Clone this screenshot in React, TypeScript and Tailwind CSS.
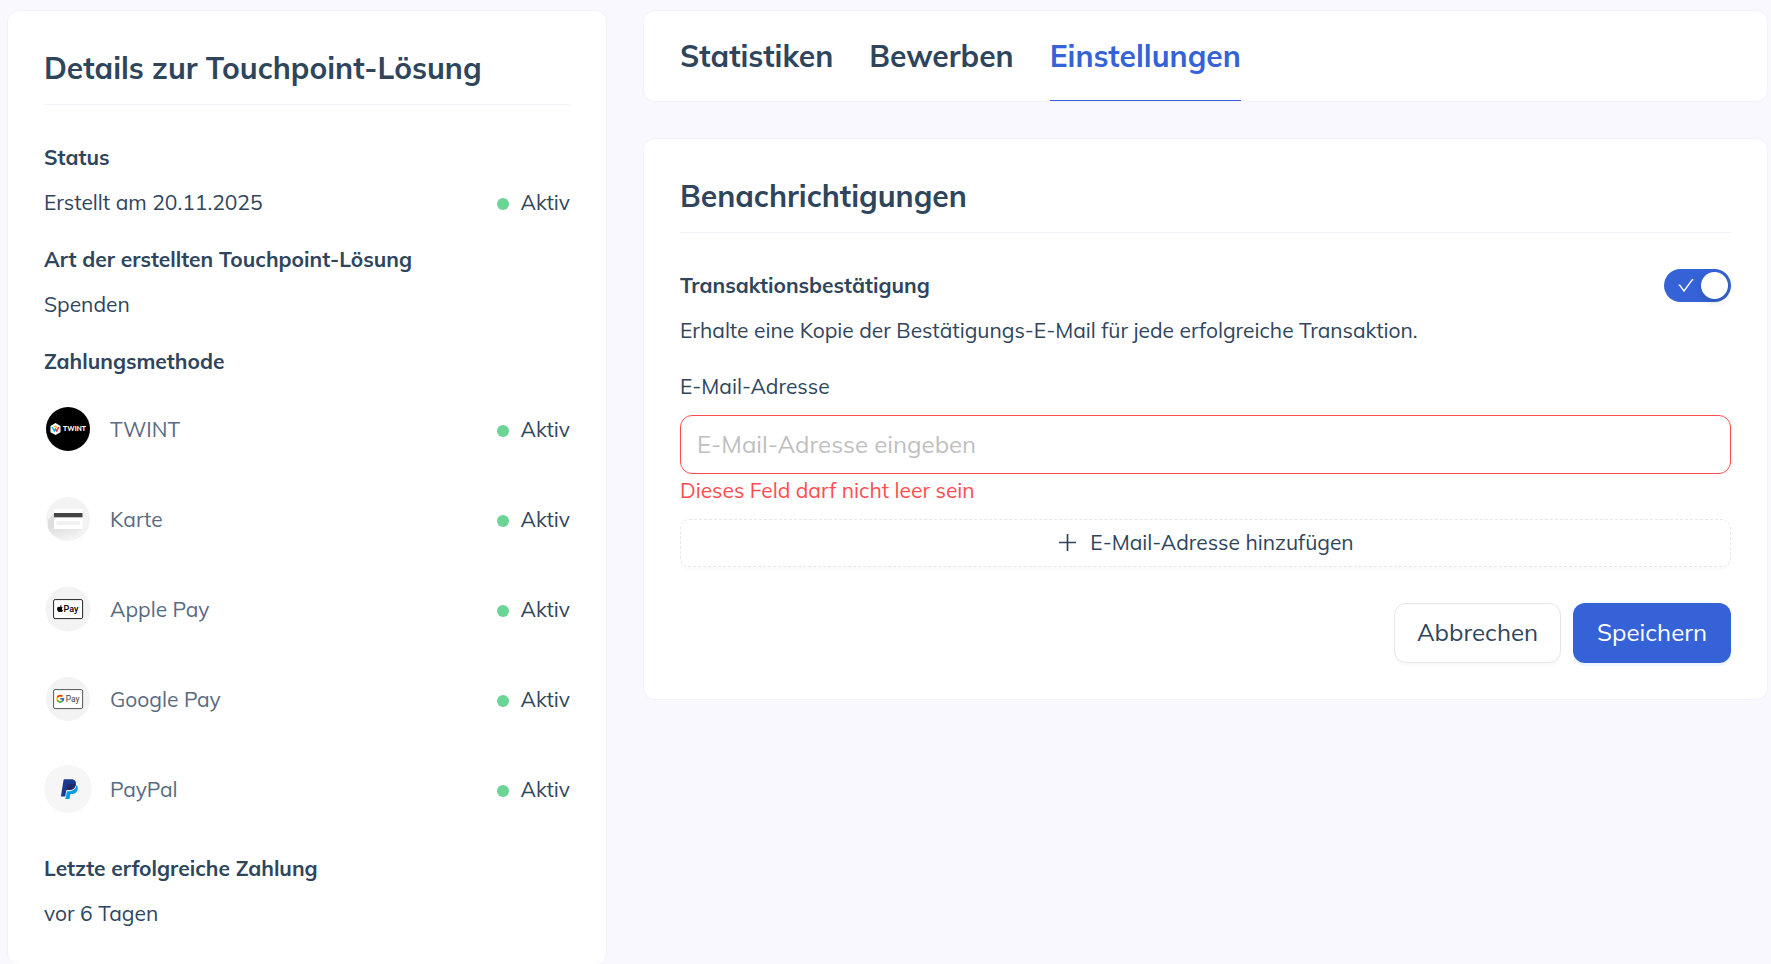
import React, { useState } from "react";
import { FaApple } from "react-icons/fa";
import { FcGoogle } from "react-icons/fc";

const TwintLogo: React.FC = () => (
  <svg viewBox="0 0 48 48" className="size-12" aria-hidden="true">
    <circle cx="24" cy="24" r="22" fill="#000" />
    <path d="M11.5 18l5 2.9v6.3l-5 2.9-5-2.9v-6.3z" fill="#fff" />
    <path d="M8.2 22l2.2 4 1.3-2.4" fill="none" stroke="#00b4e6" strokeWidth="1.5" />
    <path d="M10 21.8l1.5-.5 1.4 1.3" fill="none" stroke="#ffb31c" strokeWidth="1.5" />
    <path d="M11.2 23.6l1.5 2.4 2.1-4" fill="none" stroke="#f0343c" strokeWidth="1.5" />
    <text
      x="19"
      y="26.4"
      fill="#fff"
      fontSize="6.6"
      fontWeight="800"
      fontFamily="Mulish, 'Open Sans', sans-serif"
    >
      TWINT
    </text>
  </svg>
);

const CardLogo: React.FC = () => (
  <svg viewBox="0 0 48 48" className="size-12" aria-hidden="true">
    <defs>
      <linearGradient id="card-shadow" x1="0.3" y1="0" x2="0.6" y2="1">
        <stop offset="0.4" stopColor="#dedede" />
        <stop offset="1" stopColor="#f3f3f3" />
      </linearGradient>
      <clipPath id="card-circle">
        <circle cx="24" cy="24" r="22" />
      </clipPath>
    </defs>
    <circle cx="24" cy="24" r="22" fill="#f3f3f3" />
    <path
      d="M10 18l-6 7v20h22l12.5-11z"
      fill="url(#card-shadow)"
      clipPath="url(#card-circle)"
    />
    <rect x="10" y="14" width="28.5" height="20" fill="#fff" />
    <rect x="10" y="18" width="28.5" height="4.3" fill="#444" />
    <rect x="12.5" y="26" width="23.5" height="4" fill="#f1f1f1" />
  </svg>
);

const ApplePayLogo: React.FC = () => (
  <svg viewBox="0 0 48 48" className="size-12" aria-hidden="true">
    <circle cx="24" cy="24" r="22.5" fill="#f3f3f3" />
    <rect x="9.6" y="14.6" width="29" height="19" rx="1.5" fill="#fff" stroke="#222" />
    <FaApple x={12} y={19.5} size={8} color="#000" />
    <text
      x="19.5"
      y="27.3"
      fill="#000"
      fontSize="9"
      fontWeight="500"
      fontFamily="Roboto, 'Liberation Sans', sans-serif"
    >
      Pay
    </text>
  </svg>
);

const GooglePayLogo: React.FC = () => (
  <svg viewBox="0 0 48 48" className="size-12" aria-hidden="true">
    <circle cx="24" cy="24" r="22" fill="#f3f3f3" />
    <rect x="9.6" y="14.6" width="29" height="19" rx="1.5" fill="#fff" stroke="#555" />
    <FcGoogle x={11.5} y={19} size={9.5} />
    <text
      x="21.7"
      y="27.3"
      fill="#3c4043"
      fontSize="8.4"
      fontFamily="Roboto, 'Liberation Sans', sans-serif"
    >
      Pay
    </text>
  </svg>
);

const PayPalLogo: React.FC = () => (
  <svg viewBox="0 0 48 48" className="size-12" aria-hidden="true">
    <circle cx="24" cy="24" r="24" fill="#f6f6f6" />
    <svg x="15.5" y="14" width="19.5" height="20" viewBox="0 0 24 24">
      <path
        fill="#009ce3"
        d="M20.924 7.157a.96.96 0 0 0-.041.26c-.93 4.778-4.005 7.201-9.138 7.201h-2.19a.563.563 0 0 0-.556.479l-1.187 7.527h-.506l-.24 1.516a.56.56 0 0 0 .554.647h3.882c.46 0 .85-.334.922-.788.06-.26.76-4.852.816-5.09a.932.932 0 0 1 .923-.788h.58c3.76 0 6.705-1.528 7.565-5.946.36-1.847.174-3.388-.777-4.471z"
      />
      <path
        fill="#183b8f"
        d="M7.076 21.337H2.47a.641.641 0 0 1-.633-.74L4.944.901C5.026.382 5.474 0 5.998 0h7.46c2.57 0 4.578.543 5.69 1.81 1.01 1.15 1.304 2.42 1.012 4.287-.023.143-.047.288-.077.437-.983 5.05-4.349 6.797-8.647 6.797h-2.19c-.524 0-.968.382-1.05.9z"
      />
      <path
        fill="#1c2a6b"
        d="M9.5 6.9c.1-.6.5-.9 1-.9h5.9c1.4 0 2.6.1 3.68.5-.98 5.08-4.34 6.83-8.64 6.83H9.25c-.4 0-.7.1-.9.5z"
      />
    </svg>
  </svg>
);

const paymentMethods = [
  { name: "TWINT", Logo: TwintLogo },
  { name: "Karte", Logo: CardLogo },
  { name: "Apple Pay", Logo: ApplePayLogo },
  { name: "Google Pay", Logo: GooglePayLogo },
  { name: "PayPal", Logo: PayPalLogo },
];

const tabs = ["Statistiken", "Bewerben", "Einstellungen"];

const ActiveStatus: React.FC = () => (
  <span className="flex items-center gap-3">
    <span className="mt-[3px] size-3 rounded-full bg-[#6ad594]" />
    Aktiv
  </span>
);

const CardTitle: React.FC<{ children: React.ReactNode }> = ({ children }) => (
  <h2 className="mb-9 border-b border-[#f3f2fb] pb-[15px] text-[30px] leading-[42px] font-bold">
    {children}
  </h2>
);

const DetailsCard: React.FC = () => (
  <aside className="min-w-0 rounded-xl border border-b-0 border-[#f3f2fb] bg-white px-9 pt-9 pb-[34px]">
    <CardTitle>Details zur Touchpoint-Lösung</CardTitle>

    <h3 className="mb-3 font-bold">Status</h3>
    <div className="mb-6 flex justify-between">
      <p>Erstellt am 20.11.2025</p>
      <ActiveStatus />
    </div>

    <h3 className="mb-3 font-bold">Art der erstellten Touchpoint-Lösung</h3>
    <p className="mb-6">Spenden</p>

    <h3 className="mb-1.5 font-bold">Zahlungsmethode</h3>
    <ul className="mb-[18px]">
      {paymentMethods.map(({ name, Logo }) => (
        <li key={name} className="flex h-[90px] items-center">
          <Logo />
          <span className="ml-[18px] flex-1 text-[#596b80]">{name}</span>
          <ActiveStatus />
        </li>
      ))}
    </ul>

    <h3 className="mb-3 font-bold">Letzte erfolgreiche Zahlung</h3>
    <p>vor 6 Tagen</p>
  </aside>
);

interface ToggleProps {
  checked: boolean;
  labelId: string;
  onChange: (checked: boolean) => void;
}

const Toggle: React.FC<ToggleProps> = ({ checked, labelId, onChange }) => (
  <button
    type="button"
    role="switch"
    aria-checked={checked}
    aria-labelledby={labelId}
    onClick={() => onChange(!checked)}
    className={
      checked
        ? "flex h-[33px] w-[67px] items-center justify-between rounded-full bg-[#3662d8] pr-[3px] pl-3.5"
        : "flex h-[33px] w-[67px] flex-row-reverse items-center justify-between rounded-full bg-[#bfbfbf] pr-3.5 pl-[3px]"
    }
  >
    <svg viewBox="0 0 16 14" className="h-3.5 w-4" aria-hidden="true">
      {checked && (
        <path d="M.7 6.2h1L6 12l8.300-11.300h1" fill="none" stroke="#fff" strokeWidth="1.4" />
      )}
    </svg>
    <span className="size-[27px] rounded-full bg-white shadow-[0_3px_6px_rgba(0,35,11,0.2)]" />
  </button>
);

const NotificationsCard: React.FC = () => {
  const [enabled, setEnabled] = useState(true);
  const [email, setEmail] = useState("");

  return (
    <section className="rounded-xl border border-[#f3f2fb] bg-white p-9">
      <CardTitle>Benachrichtigungen</CardTitle>

      <div className="mb-3 flex items-center justify-between">
        <h3 id="confirmation-label" className="font-bold">
          Transaktionsbestätigung
        </h3>
        <Toggle checked={enabled} labelId="confirmation-label" onChange={setEnabled} />
      </div>
      <p>Erhalte eine Kopie der Bestätigungs-E-Mail für jede erfolgreiche Transaktion.</p>

      <label htmlFor="email" className="mt-[23px] mb-3 block">
        E-Mail-Adresse
      </label>
      <input
        id="email"
        type="email"
        value={email}
        onChange={(e) => setEmail(e.target.value)}
        placeholder="E-Mail-Adresse eingeben"
        aria-invalid={email === ""}
        aria-describedby="email-error"
        className="block h-[59px] w-full rounded-xl border border-[#ff4d4f] px-4 pb-0.5 text-2xl placeholder:text-[#bfbfbf]"
      />
      <p id="email-error" className="mb-3 text-[#ff4d4f]">
        Dieses Feld darf nicht leer sein
      </p>

      <button
        type="button"
        className="mb-9 flex h-12 w-full items-center justify-center gap-3 rounded-[9px] border border-dashed border-[#e6e6e8] pb-0.5 shadow-[0_3px_0_rgba(0,0,0,0.02)]"
      >
        <svg viewBox="0 0 21 21" className="size-[21px]" aria-hidden="true">
          <path d="M10.5 2v17M2 10.5h17" fill="none" stroke="currentColor" strokeWidth="1.7" />
        </svg>
        E-Mail-Adresse hinzufügen
      </button>

      {/* Aktionen */}
      <div className="flex justify-end gap-3 text-2xl">
        <button
          type="button"
          className="h-[60px] rounded-xl border border-[#e6e6e8] bg-white px-[22px] pb-0.5 shadow-[0_3px_0_rgba(0,0,0,0.02)]"
        >
          Abbrechen
        </button>
        <button
          type="button"
          className="h-[60px] rounded-xl bg-[#3662d8] px-6 pb-0.5 text-white shadow-[0_3px_0_rgba(5,145,255,0.08)]"
        >
          Speichern
        </button>
      </div>
    </section>
  );
};

const App: React.FC = () => {
  const [activeTab, setActiveTab] = useState("Einstellungen");

  return (
    <div className="grid min-h-screen grid-cols-[8fr_15fr] gap-9 bg-[#f8f8fe] pt-2.5 pr-[3px] pl-[7px] font-['Mulish','Open_Sans',sans-serif] text-[21px] leading-[33px] text-[#2f455c]">
      <DetailsCard />

      <main className="flex min-w-0 flex-col gap-9">
        <nav
          role="tablist"
          className="flex gap-9 rounded-xl border border-[#f3f2fb] bg-white px-9 text-[30px] leading-[42px] font-bold"
        >
          {tabs.map((tab) => (
            <button
              key={tab}
              type="button"
              role="tab"
              aria-selected={tab === activeTab}
              onClick={() => setActiveTab(tab)}
              className={
                tab === activeTab
                  ? "border-b border-[#3662d8] pt-6 pb-[23px] text-[#3662d8]"
                  : "border-b border-transparent pt-6 pb-[23px]"
              }
            >
              {tab}
            </button>
          ))}
        </nav>
        <NotificationsCard />
      </main>
    </div>
  );
};

export default App;
